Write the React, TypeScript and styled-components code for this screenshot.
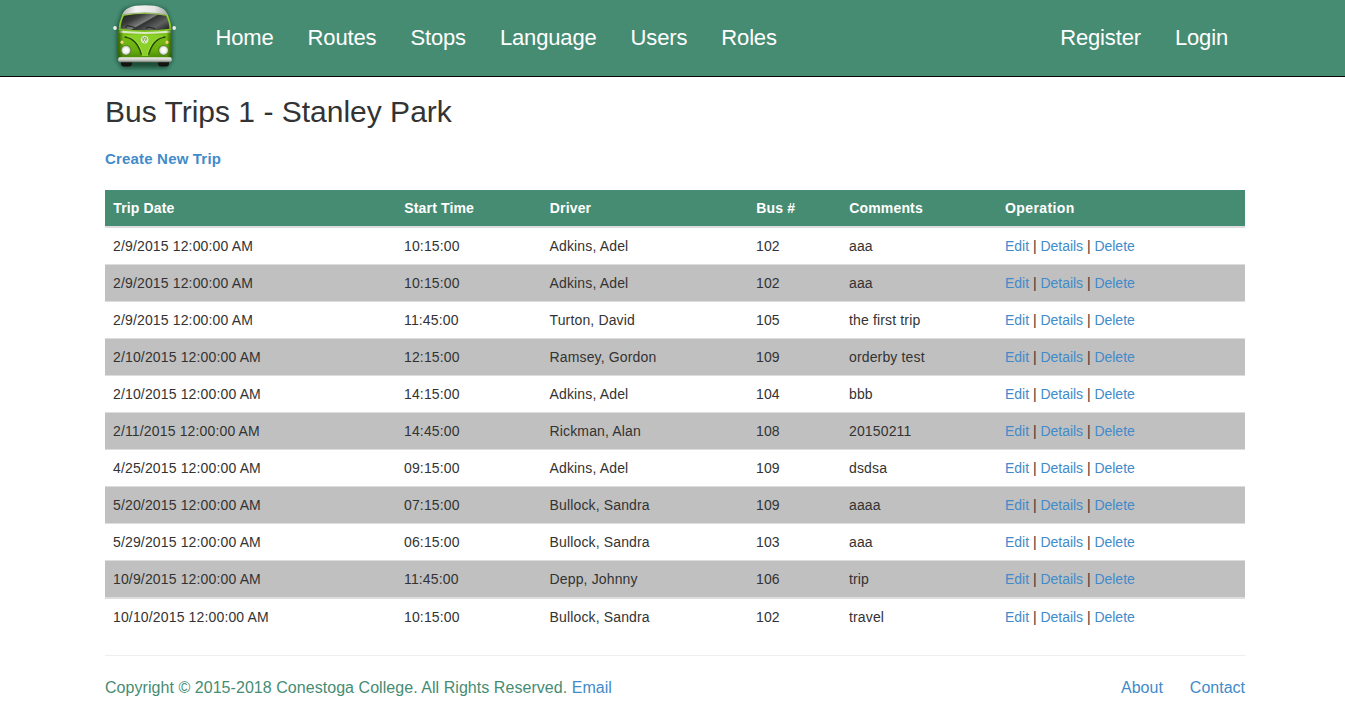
import React from "react";
import styled, { createGlobalStyle, css } from "styled-components";

const GREEN = "#468c73";
const LINK = "#428bca";

const GlobalStyle = createGlobalStyle`
  * { box-sizing: border-box; }
  body {
    margin: 0;
    background: #fff;
    color: #333;
    font: 14px/20px "Liberation Sans", Arial, Helvetica, sans-serif;
  }
`;

const Navbar = styled.header`
  height: 77px;
  background: ${GREEN};
  border-bottom: 1px solid #080808;
`;

const Container = styled.div`
  width: 1140px;
  margin-left: 105px;
`;

const NavInner = styled(Container)`
  height: 76px;
  display: flex;
  align-items: center;
`;

const Brand = styled.a`
  width: 78px;
  height: 76px;
  margin-right: 15.5px;
  display: block;
`;

const NavList = styled.nav`
  display: flex;
`;

const NavRight = styled(NavList)`
  margin-left: auto;
`;

const NavLink = styled.a`
  padding: 0 17px;
  font-size: 22px;
  line-height: 26px;
  letter-spacing: -0.15px;
  color: #fff;
  text-decoration: none;
`;

const Link = styled.a<{ $strong?: boolean }>`
  color: ${LINK};
  text-decoration: none;
  ${(p) => p.$strong && css`
    font-weight: bold;
    font-size: 15px;
    letter-spacing: 0.18px;
  `}
`;

const Title = styled.h2`
  margin: 18px 0 0;
  font-size: 30px;
  line-height: 33px;
  font-weight: normal;
`;

const Actions = styled.p`
  margin: 21px 0;
`;

const Table = styled.table`
  width: 1140px;
  table-layout: fixed;
  border-collapse: separate;
  border-spacing: 0;
  letter-spacing: 0.15px;
`;

const HeadCell = styled.th<{ $width: number }>`
  width: ${(p) => p.$width}px;
  height: 38px;
  padding: 8px 8px 8px 8.3px;
  background: ${GREEN};
  color: #fff;
  text-align: left;
  border-bottom: 2px solid #ddd;
  &:last-child { padding-left: 8px; letter-spacing: 0.4px; }
`;

const Cell = styled.td`
  padding: 8px;
  border-top: 1px solid #ddd;
  &:last-child { letter-spacing: -0.02px; }
`;

const Row = styled.tr`
  height: 37px;
  &:nth-child(even) { background: #c0c0c0; }
  &:first-child { height: 36px; }
  &:first-child ${Cell} { border-top: 0; }
  &:last-child { height: 38px; }
  &:last-child ${Cell} { border-top-width: 2px; }
`;

const Footer = styled.footer`
  margin-top: 20px;
  padding-top: 22px;
  border-top: 1px solid #eee;
  display: flex;
  justify-content: space-between;
  font-size: 16px;
  color: ${GREEN};
`;

const Copyright = styled.div`
  letter-spacing: 0.05px;
`;

const FooterLinks = styled.div`
  display: flex;
  gap: 27px;
`;

const columns: [string, number][] = [
  ["Trip Date", 291],
  ["Start Time", 145.5],
  ["Driver", 206.5],
  ["Bus #", 93],
  ["Comments", 156],
  ["Operation", 248],
];

const trips = [
  ["2/9/2015", "10:15:00", "Adkins, Adel", "102", "aaa"],
  ["2/9/2015", "10:15:00", "Adkins, Adel", "102", "aaa"],
  ["2/9/2015", "11:45:00", "Turton, David", "105", "the first trip"],
  ["2/10/2015", "12:15:00", "Ramsey, Gordon", "109", "orderby test"],
  ["2/10/2015", "14:15:00", "Adkins, Adel", "104", "bbb"],
  ["2/11/2015", "14:45:00", "Rickman, Alan", "108", "20150211"],
  ["4/25/2015", "09:15:00", "Adkins, Adel", "109", "dsdsa"],
  ["5/20/2015", "07:15:00", "Bullock, Sandra", "109", "aaaa"],
  ["5/29/2015", "06:15:00", "Bullock, Sandra", "103", "aaa"],
  ["10/9/2015", "11:45:00", "Depp, Johnny", "106", "trip"],
  ["10/10/2015", "10:15:00", "Bullock, Sandra", "102", "travel"],
];

function BusLogo() {
  return (
    <svg width="78" height="76" viewBox="0 0 78 76" role="img" aria-label="Bus">
      <defs>
        <linearGradient id="roof" x1="0" y1="0" x2="1" y2="0">
          <stop offset="0" stopColor="#b4b8b4" />
          <stop offset="0.3" stopColor="#f4f4f4" />
          <stop offset="0.7" stopColor="#e6e6e6" />
          <stop offset="1" stopColor="#a4aaa4" />
        </linearGradient>
        <linearGradient id="body" x1="0" y1="0" x2="0" y2="1">
          <stop offset="0" stopColor="#9bd630" />
          <stop offset="0.45" stopColor="#7dc01b" />
          <stop offset="0.8" stopColor="#66ac0c" />
          <stop offset="1" stopColor="#3f7a05" />
        </linearGradient>
        <linearGradient id="side" x1="0" y1="0" x2="1" y2="0">
          <stop offset="0" stopColor="#1d4200" stopOpacity="0.75" />
          <stop offset="0.1" stopColor="#1d4200" stopOpacity="0" />
          <stop offset="0.9" stopColor="#1d4200" stopOpacity="0" />
          <stop offset="1" stopColor="#1d4200" stopOpacity="0.75" />
        </linearGradient>
        <linearGradient id="glass" x1="0" y1="0.2" x2="1" y2="0.8">
          <stop offset="0" stopColor="#222423" />
          <stop offset="0.25" stopColor="#3a3c3b" />
          <stop offset="0.48" stopColor="#7c7f7d" />
          <stop offset="0.52" stopColor="#303231" />
          <stop offset="0.78" stopColor="#5e6160" />
          <stop offset="1" stopColor="#2c2e2d" />
        </linearGradient>
        <linearGradient id="bumper" x1="0" y1="0" x2="0" y2="1">
          <stop offset="0" stopColor="#f0f0ec" />
          <stop offset="0.6" stopColor="#c4c7c0" />
          <stop offset="1" stopColor="#6f736c" />
        </linearGradient>
        <radialGradient id="lamp">
          <stop offset="0" stopColor="#fff" />
          <stop offset="0.6" stopColor="#f4f4f0" />
          <stop offset="1" stopColor="#a9b59c" />
        </radialGradient>
        <filter id="glow" x="-20%" y="-20%" width="140%" height="140%">
          <feGaussianBlur stdDeviation="2.2" />
        </filter>
      </defs>
      <path d="M18 10Q39 2 61 10L67 27V60L62 68H17L12 60V27Z" fill="#10301f" opacity="0.7" filter="url(#glow)" />
      <rect x="16" y="57" width="11" height="9.5" rx="3" fill="#121512" />
      <rect x="53" y="57" width="11" height="9.5" rx="3" fill="#121512" />
      <path d="M17.5 14Q39.5 7 62.5 14Q66.5 23 66.7 32V56Q66.7 61 61 61H18.5Q13.2 61 13.2 56V32Q13.5 23 17.5 14Z" fill="url(#body)" />
      <path d="M17.3 15C19 8.5 26 5.3 40 5.3S61 8.5 62.7 15Q40 10.5 17.3 15Z" fill="url(#roof)" />
      <path d="M19 15.8Q40 11.5 61 15.8Q64 21 64.5 28.8Q40 31.8 15.5 28.8Q16 21 19 15.8Z" fill="url(#glass)" />
      <path d="M18 14.8Q40 10.8 62 14.8" fill="none" stroke="#93a678" strokeWidth="0.8" />
      <path d="M20.5 28L22 25.5L30 27.5M41 29L42.5 27L50 28.5" fill="none" stroke="#171918" strokeWidth="0.9" />
      <path d="M14 30.6Q40 33.3 66 30.6V32.8Q40 35 14 32.8Z" fill="#dbe9c4" />
      <path d="M18 36C28 36 35 43 37 56H43C45 43 52 36 62 36C54 33.8 26 33.8 18 36Z" fill="#8bcf29" />
      <path d="M19.5 37C29 37.5 33.5 45 36.5 54.5M60.5 37C51 37.5 46.5 45 43.5 54.5" fill="none" stroke="#234907" strokeWidth="1.5" />
      <path d="M22 36.6C30 38 35 45 37.6 54M58 36.6C50 38 45 45 42.4 54" fill="none" stroke="#b5e64f" strokeWidth="0.6" />
      <path d="M13.2 30H66.7V57H13.2Z" fill="url(#side)" />
      <circle cx="39.7" cy="39.7" r="3.4" fill="#83a850" stroke="#eef4df" strokeWidth="1" />
      <path d="M38.2 37.3L39.7 39.6L41.2 37.3M37 38.8L38.4 42.2L39.7 40L41 42.2L42.4 38.8" fill="none" stroke="#fff" strokeWidth="0.7" />
      <circle cx="21" cy="50.3" r="5.4" fill="#4d7c18" />
      <circle cx="58.6" cy="50.3" r="5.4" fill="#4d7c18" />
      <circle cx="21" cy="50.3" r="4.6" fill="url(#lamp)" />
      <circle cx="58.6" cy="50.3" r="4.6" fill="url(#lamp)" />
      <ellipse cx="17" cy="42.3" rx="1.5" ry="1.7" fill="#f6d27e" />
      <ellipse cx="62" cy="42.3" rx="1.5" ry="1.7" fill="#f6d27e" />
      <rect x="13.2" y="57.2" width="53.5" height="5" rx="2" fill="url(#bumper)" />
      <path d="M11 28H14.5M65.5 28H68" stroke="#4a5a4f" strokeWidth="1" />
      <ellipse cx="10" cy="28" rx="1.8" ry="2.1" fill="#eceeea" />
      <ellipse cx="69.2" cy="28" rx="1.8" ry="2.1" fill="#eceeea" />
    </svg>
  );
}

export default function App() {
  return (
    <>
      <GlobalStyle />
      <Navbar>
        <NavInner>
          <Brand><BusLogo /></Brand>
          <NavList>
            {["Home", "Routes", "Stops", "Language", "Users", "Roles"].map((n) => (
              <NavLink key={n}>{n}</NavLink>
            ))}
          </NavList>
          <NavRight>
            <NavLink>Register</NavLink>
            <NavLink>Login</NavLink>
          </NavRight>
        </NavInner>
      </Navbar>
      <Container as="main">
        <Title>Bus Trips 1 - Stanley Park</Title>
        <Actions><Link $strong>Create New Trip</Link></Actions>
        <Table>
          <thead>
            <tr>
              {columns.map(([label, width]) => (
                <HeadCell key={label} $width={width}>{label}</HeadCell>
              ))}
            </tr>
          </thead>
          <tbody>
            {trips.map(([date, ...rest], i) => (
              <Row key={i}>
                <Cell>{`${date} 12:00:00 AM`}</Cell>
                {rest.map((value, j) => <Cell key={j}>{value}</Cell>)}
                <Cell>
                  <Link>Edit</Link> | <Link>Details</Link> | <Link>Delete</Link>
                </Cell>
              </Row>
            ))}
          </tbody>
        </Table>
        <Footer>
          <Copyright>Copyright © 2015-2018 Conestoga College. All Rights Reserved. <Link>Email</Link></Copyright>
          <FooterLinks>
            <Link>About</Link>
            <Link>Contact</Link>
          </FooterLinks>
        </Footer>
      </Container>
    </>
  );
}
